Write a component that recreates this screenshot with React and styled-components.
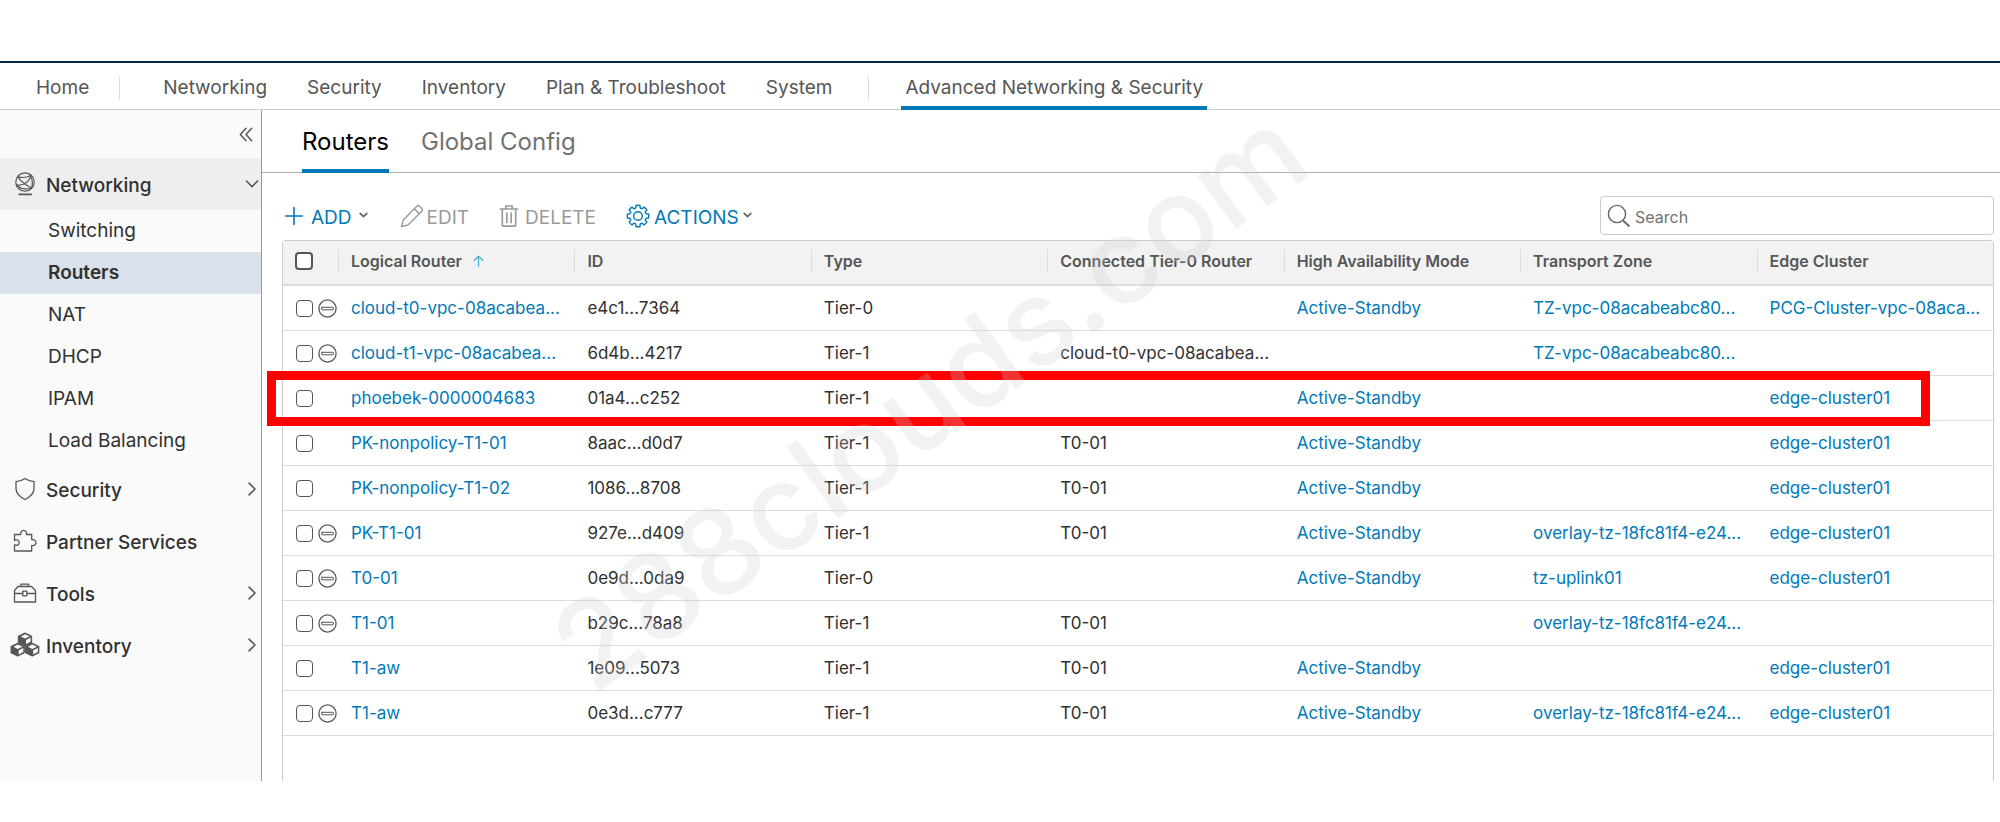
import React from "react";
import styled, { createGlobalStyle } from "styled-components";

const blue = "#0079b8";
const ink = "#313131";
const grey = "#565656";
const line = "#dddddd";

const GlobalStyle = createGlobalStyle`
  * { box-sizing: border-box; }
  body {
    margin: 0;
    background: #fff;
    color: ${ink};
    font-family: Inter, "Open Sans", sans-serif;
    font-size: 17px;
    line-height: 24px;
  }
  a { color: inherit; text-decoration: none; }
  button {
    margin: 0;
    padding: 0;
    border: 0;
    background: none;
    color: inherit;
    font: inherit;
    cursor: pointer;
  }
`;

const Page = styled.div`
  position: relative;
  padding-top: 61px;
  overflow: hidden;
`;

const MainNav = styled.nav`
  display: flex;
  align-items: stretch;
  height: 49px;
  padding-left: 36px;
  border-top: 2px solid #00253d;
  border-bottom: 1px solid #cccccc;
  font-size: 19px;
  color: ${grey};
`;

const NavLink = styled.a`
  display: flex;
  align-items: center;
  margin-right: ${(p) => p.$gap || 40}px;
  padding-top: 4px;
`;

const ActiveNavLink = styled(NavLink)`
  margin-right: 0;
  margin-bottom: -1px;
  padding: 7px 4px 0;
  border-bottom: 4px solid ${blue};
`;

const NavDivider = styled.span`
  width: 1px;
  height: 23px;
  margin: 14px ${(p) => p.$gap}px 0 0;
  background: ${line};
`;

const Body = styled.div`
  display: flex;
`;

const Sidebar = styled.aside`
  flex: 0 0 262px;
  border-right: 1px solid #999;
  background: #fafafa;
`;

const CollapseRow = styled.div`
  display: flex;
  align-items: center;
  justify-content: flex-end;
  height: 48px;
  padding-right: 8px;
`;

const Collapse = styled.button`
  display: flex;
`;

const Group = styled.button`
  display: flex;
  align-items: center;
  width: 100%;
  height: 52px;
  padding: 0 2px 0 9px;
  background: ${(p) => (p.$open ? "#eeeeee" : "none")};
  font-size: 19px;
  font-weight: 500;
  text-align: left;
`;

const GroupIcon = styled.span`
  display: flex;
  justify-content: center;
  width: 32px;
  margin-right: 5px;
`;

const GroupLabel = styled.span`
  flex: 1;
  padding-top: 3px;
`;

const SubList = styled.ul`
  margin: 0 0 1px;
  padding: 0;
  list-style: none;
`;

const SubLink = styled.a`
  display: flex;
  align-items: center;
  height: 42px;
  padding: 0 0 1px 48px;
  font-size: 19px;
  font-weight: ${(p) => (p.$active ? 600 : 400)};
  background: ${(p) => (p.$active ? "#d9e2ea" : "none")};
`;

const Content = styled.main`
  flex: 1;
  min-width: 0;
`;

const Tabs = styled.div`
  display: flex;
  gap: 32px;
  height: 63px;
  padding-left: 40px;
  border-bottom: 1px solid #b0b0b0;
`;

const Tab = styled.button`
  height: 63px;
  padding-top: 4px;
  border-bottom: 4px solid ${(p) => (p.$active ? blue : "transparent")};
  color: ${(p) => (p.$active ? "#000" : "#717171")};
  font-size: 24px;
`;

const Toolbar = styled.div`
  display: flex;
  align-items: center;
  height: 67px;
  padding: 18px 6px 0 22px;
`;

const Action = styled.button`
  display: flex;
  align-items: center;
  gap: ${(p) => p.$gap || 7}px;
  margin-right: ${(p) => (p.disabled ? 30 : 32)}px;
  color: ${(p) => (p.disabled ? "#9a9a9a" : blue)};
  font-size: 19px;
`;

const ActionLabel = styled.span`
  padding-top: 5px;
`;

const SearchBox = styled.label`
  display: flex;
  align-items: center;
  gap: 4px;
  width: 394px;
  height: 39px;
  margin-left: auto;
  padding: 1px 6px 0;
  border: 1px solid #ccc;
  border-radius: 4px;
`;

const SearchInput = styled.input`
  flex: 1;
  min-width: 0;
  padding: 2px 0 0;
  border: 0;
  outline: 0;
  background: none;
  color: ${grey};
  font: inherit;
  font-size: 16px;
  &::placeholder { color: #717171; opacity: 1; }
`;

const GridWrap = styled.div`
  position: relative;
  margin: 0 6px 0 20px;
  padding-bottom: 45px;
  border: 1px solid #ccc;
  border-bottom: 0;
  border-radius: 4px 4px 0 0;
`;

const Grid = styled.table`
  width: 100%;
  border-collapse: separate;
  border-spacing: 0;
  table-layout: fixed;
`;

const HeadCell = styled.th`
  width: ${(p) => (p.$check ? "55px" : "auto")};
  height: 45px;
  padding: 0 0 3px ${(p) => (p.$check ? 12 : 0)}px;
  border-bottom: 2px solid ${line};
  background: #f2f2f2;
  color: ${grey};
  font-size: 16px;
  font-weight: 600;
  text-align: left;
`;

const HeadLabel = styled.div`
  display: flex;
  align-items: center;
  gap: 11px;
  padding-left: 12px;
  border-left: 1px solid ${line};
`;

const Cell = styled.td`
  height: 45px;
  padding: 0 0 0 13px;
  border-bottom: 1px solid ${line};
  color: ${ink};
  white-space: nowrap;
  overflow: hidden;
`;

const CellLink = styled.a`
  color: ${blue};
`;

const Marks = styled.div`
  display: flex;
  align-items: center;
  gap: 5px;
`;

const Check = styled.input`
  appearance: none;
  display: block;
  flex: none;
  width: ${(p) => p.$size}px;
  height: ${(p) => p.$size}px;
  margin: 0;
  border: ${(p) => (p.$size > 17 ? 2 : 1)}px solid ${grey};
  border-radius: 4px;
  background: #fff;
`;

const Highlight = styled.div`
  position: absolute;
  top: 130px;
  left: -16px;
  right: 63px;
  height: 55px;
  border: 9px solid #f00;
  pointer-events: none;
`;

const Watermark = styled.div`
  position: absolute;
  top: 324px;
  left: 479px;
  width: 900px;
  color: rgba(202, 202, 202, 0.25);
  font-size: 120px;
  font-weight: 500;
  line-height: 150px;
  text-align: center;
  transform: rotate(-36deg);
  pointer-events: none;
`;

function Icon({ w, h = w, box, children, sw = 1, color = "currentColor" }) {
  return (
    <svg width={w} height={h} viewBox={box || `0 0 ${w} ${h}`} fill="none" stroke={color}
      strokeWidth={sw} strokeLinecap="round" strokeLinejoin="round" aria-hidden="true">
      {children}
    </svg>
  );
}

const ChevronRight = () => (
  <Icon w={14} h={14} sw={1.6} color={grey}><path d="M4 1.2 10 7l-6 5.8" /></Icon>
);
const ChevronDown = () => (
  <Icon w={14} h={14} sw={1.6} color={grey}><path d="M1.5 4 7 9.8 12.5 4" /></Icon>
);
const Caret = () => (
  <Icon w={9} h={7} sw={1.7} color="#666"><path d="M1.2 1.4 4.5 4.7 7.8 1.4" /></Icon>
);

const Globe = () => (
  <Icon w={22} h={24} sw={1.2} color={grey}>
    <circle cx="11" cy="10" r="9.2" />
    <path d="M4 4.800c3.800 1.100 8.300.9 12.800-1.300M3.900 5.200c2.300 3 6.600 7.400 13.600 10.800M16.600 4.200c-.8 3.400-3 6-6.100 7.500M2.200 12.500c2.500 1 5.500.7 8.300-.8M16.600 4.200c1.900 3.300 2.200 7.600.9 11.800M2.800 13.800c3.700 2.800 9.200 4 14.700 2.200" />
    <path d="M5.200 22.300h12" strokeWidth="1.700" />
  </Icon>
);
const Shield = () => (
  <Icon w={22} h={24} sw={1.3} color={grey}>
    <path d="M11 1.500C8.300 3.400 5.300 4.400 2 4.600v6.900c0 5 3.800 8.400 9 11 5.200-2.600 9-6 9-11V4.600c-3.300-.2-6.300-1.200-9-3.100z" />
  </Icon>
);
const Puzzle = () => (
  <Icon w={24} h={24} sw={1.3} color={grey}>
    <path d="M1.500 22V15.800c1 .6 2.200.7 3.200.3 2-.8 2-4.200 0-5-1-.4-2.200-.3-3.200.3V5.500h6.200c-.3-2.300.9-4.200 2.900-4.200s3.200 1.900 2.900 4.200h5.200v5.200c2.600-.5 4.300.8 4.300 2.900s-1.700 3.400-4.300 2.900V22z" />
  </Icon>
);
const Toolbox = () => (
  <Icon w={24} h={24} sw={1.3} color={grey}>
    <path d="M8 5.500V3.200h7.500v2.300M1.500 21V9.500l3.500-4h13.500l4 4V21z" />
    <path d="M1.500 12.500h8M14 12.500h8.500M9.800 10.200h4v4.600h-4z" />
  </Icon>
);
const Cube = ({ x, y }) => (
  <g transform={`translate(${x} ${y})`}>
    <path d="M7.200.6 13.800 3.800V10L7.200 13.400.6 10V3.800z" fill={grey} />
    <path d="M7.400 1.900 12 4 7.200 6.200 3 4.100z" fill="#fafafa" stroke="none" />
    <path d="M8.200 7.500 12.800 5.300V9.400L8.200 11.700z" fill="#fafafa" stroke="none" />
  </g>
);
const Cubes = () => (
  <Icon w={30} h={26} sw={1.1} color={grey}>
    <Cube x={7.800} y={0.400} /><Cube x={0.500} y={10.700} /><Cube x={15} y={10.700} />
  </Icon>
);
const DoubleLeft = () => (
  <Icon w={14} h={15} sw={1.5} color={grey}><path d="M7 1.200 1.300 7.500 7 13.800M12.700 1.200 7 7.500l5.700 6.300" /></Icon>
);
const Plus = () => (
  <Icon w={20} sw={1.6}><path d="M10 1.500v17M1.500 10h17" /></Icon>
);
const Pencil = () => (
  <Icon w={24} sw={1.4}>
    <path d="M1.500 22.500 3.200 16 16.800 2.200c.8-.8 1.900-.8 2.700 0l2.300 2.300c.8.8.8 1.900 0 2.700L8 21zM14.300 4.800l4.900 4.900" />
  </Icon>
);
const Trash = () => (
  <Icon w={20} h={24} sw={1.7}>
    <path d="M1.500 5h17M6.800 4.500V2h6.400v2.500M3.300 5v15.500c0 1 .6 1.700 1.700 1.700h10c1.100 0 1.700-.7 1.700-1.700V5M7.800 9v9.500M12.200 9v9.500" />
  </Icon>
);
const gearPath = (() => {
  const pt = (r, a) => `${(12 + r * Math.cos(a)).toFixed(2)} ${(12 + r * Math.sin(a)).toFixed(2)}`;
  const step = Math.PI / 4;
  let d = "";
  for (let i = 0; i < 8; i++) {
    const a = i * step - Math.PI / 2;
    d += `${i ? "L" : "M"}${pt(8.300, a - 0.270)}L${pt(10.700, a - 0.190)}Q${pt(11, a)} ${pt(10.700, a + 0.190)}L${pt(8.300, a + 0.270)}`;
  }
  return d + "Z";
})();
const Gear = () => (
  <Icon w={24} sw={1.4}><path d={gearPath} /><circle cx="12" cy="12" r="4.300" /></Icon>
);
const Magnifier = () => (
  <Icon w={24} sw={1.4} color="#666"><circle cx="10" cy="10" r="8.600" /><path d="m16.500 17 5.500 5" strokeWidth="1.800" /></Icon>
);
const SortUp = () => (
  <Icon w={11} h={12} sw={1.3} color="#49afd9"><path d="M5.500 11V1.200M1.200 5.300 5.500 1.200l4.300 4.100" /></Icon>
);
const Minus = () => (
  <Icon w={19} sw={1.3} color={grey}><circle cx="9.500" cy="9.500" r="8.600" /><rect x="3.600" y="8.300" width="11.800" height="2.500" rx="0.500" strokeWidth="1" /></Icon>
);

const subItems = ["Switching", "Routers", "NAT", "DHCP", "IPAM", "Load Balancing"];
const groups = [
  ["Security", Shield, true],
  ["Partner Services", Puzzle, false],
  ["Tools", Toolbox, true],
  ["Inventory", Cubes, true],
];
const columns = ["Logical Router", "ID", "Type", "Connected Tier-0 Router", "High Availability Mode", "Transport Zone", "Edge Cluster"];
const AS = "Active-Standby";
const EC = "edge-cluster01";
const OV = "overlay-tz-18fc81f4-e24...";
const rows = [
  [true, "cloud-t0-vpc-08acabea...", "e4c1...7364", "Tier-0", "", AS, "TZ-vpc-08acabeabc80...", "PCG-Cluster-vpc-08aca..."],
  [true, "cloud-t1-vpc-08acabea...", "6d4b...4217", "Tier-1", "cloud-t0-vpc-08acabea...", "", "TZ-vpc-08acabeabc80...", ""],
  [false, "phoebek-0000004683", "01a4...c252", "Tier-1", "", AS, "", EC],
  [false, "PK-nonpolicy-T1-01", "8aac...d0d7", "Tier-1", "T0-01", AS, "", EC],
  [false, "PK-nonpolicy-T1-02", "1086...8708", "Tier-1", "T0-01", AS, "", EC],
  [true, "PK-T1-01", "927e...d409", "Tier-1", "T0-01", AS, OV, EC],
  [true, "T0-01", "0e9d...0da9", "Tier-0", "", AS, "tz-uplink01", EC],
  [true, "T1-01", "b29c...78a8", "Tier-1", "T0-01", "", OV, ""],
  [false, "T1-aw", "1e09...5073", "Tier-1", "T0-01", AS, "", EC],
  [true, "T1-aw", "0e3d...c777", "Tier-1", "T0-01", AS, OV, EC],
];

const LinkCell = ({ text }) => <Cell>{text && <CellLink href="#">{text}</CellLink>}</Cell>;

export default function App() {
  return (
    <Page>
      <GlobalStyle />
      <MainNav>
        <NavLink href="#" $gap={30}>Home</NavLink>
        <NavDivider $gap={43} />
        <NavLink href="#">Networking</NavLink>
        <NavLink href="#">Security</NavLink>
        <NavLink href="#">Inventory</NavLink>
        <NavLink href="#">Plan &amp; Troubleshoot</NavLink>
        <NavLink href="#" $gap={36}>System</NavLink>
        <NavDivider $gap={32} />
        <ActiveNavLink href="#" aria-current="page">Advanced Networking &amp; Security</ActiveNavLink>
      </MainNav>
      <Body>
        <Sidebar>
          <CollapseRow><Collapse aria-label="Collapse"><DoubleLeft /></Collapse></CollapseRow>
          <Group $open>
            <GroupIcon><Globe /></GroupIcon>
            <GroupLabel>Networking</GroupLabel>
            <ChevronDown />
          </Group>
          <SubList>
            {subItems.map((s) => (
              <li key={s}><SubLink href="#" $active={s === "Routers"}>{s}</SubLink></li>
            ))}
          </SubList>
          {groups.map(([label, Glyph, more]) => (
            <Group key={label}>
              <GroupIcon><Glyph /></GroupIcon>
              <GroupLabel>{label}</GroupLabel>
              {more && <ChevronRight />}
            </Group>
          ))}
        </Sidebar>
        <Content>
          <Tabs>
            <Tab $active>Routers</Tab>
            <Tab>Global Config</Tab>
          </Tabs>
          <Toolbar>
            <Action><Plus /><ActionLabel>ADD</ActionLabel><Caret /></Action>
            <Action disabled $gap={3}><Pencil /><ActionLabel>EDIT</ActionLabel></Action>
            <Action disabled $gap={6}><Trash /><ActionLabel>DELETE</ActionLabel></Action>
            <Action $gap={4}><Gear /><ActionLabel>ACTIONS</ActionLabel><Caret /></Action>
            <SearchBox>
              <Magnifier />
              <SearchInput type="text" placeholder="Search" aria-label="Search" />
            </SearchBox>
          </Toolbar>
          <GridWrap>
            <Grid>
              <thead>
                <tr>
                  <HeadCell $check><Check type="checkbox" $size={18} aria-label="Select all" /></HeadCell>
                  {columns.map((c, i) => (
                    <HeadCell key={c}><HeadLabel>{c}{i === 0 && <SortUp />}</HeadLabel></HeadCell>
                  ))}
                </tr>
              </thead>
              <tbody>
                {rows.map(([locked, name, id, type, tier0, mode, zone, cluster]) => (
                  <tr key={id}>
                    <Cell>
                      <Marks>
                        <Check type="checkbox" $size={17} aria-label={`Select ${name}`} />
                        {locked && <Minus />}
                      </Marks>
                    </Cell>
                    <LinkCell text={name} />
                    <Cell>{id}</Cell>
                    <Cell>{type}</Cell>
                    <Cell>{tier0}</Cell>
                    <LinkCell text={mode} />
                    <LinkCell text={zone} />
                    <LinkCell text={cluster} />
                  </tr>
                ))}
              </tbody>
            </Grid>
            <Highlight />
          </GridWrap>
        </Content>
      </Body>
      <Watermark>288clouds.com</Watermark>
    </Page>
  );
}
